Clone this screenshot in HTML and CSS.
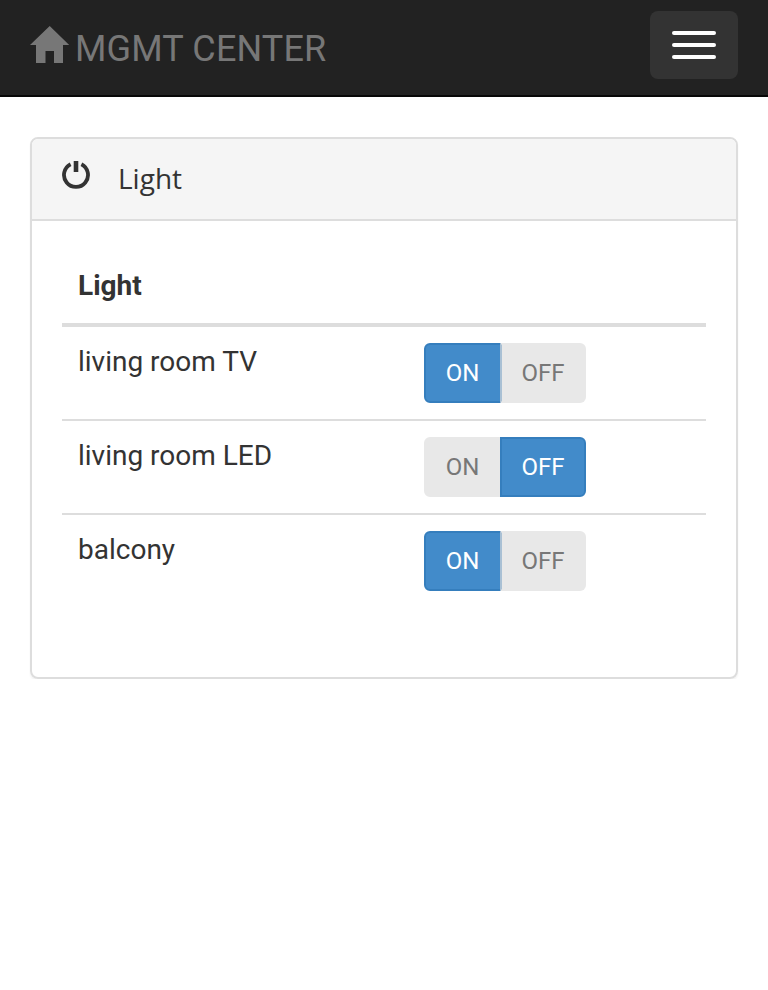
FILE: index.html
```html
<!DOCTYPE html>
<html lang="en">
<head>
<meta charset="utf-8">
<title>MGMT CENTER</title>
<link rel="stylesheet" href="styles.css">
</head>
<body>
<nav class="navbar">
  <a class="brand">
    <svg class="home" width="40" height="38" viewBox="0 0 40 38"><path d="M19.7 0L39.2 19H33V37H24V25H15.5V37H6V19H0Z"/></svg>
    <span class="brand-name">MGMT CENTER</span>
  </a>
  <button class="toggle" aria-label="Menu"><i></i><i></i><i></i></button>
</nav>
<main class="panel">
  <header class="panel-heading">
    <svg class="power" width="28" height="30" viewBox="0 0 28 30"><path class="ring" d="M8.6 4.2A12 12 0 1 0 19.4 4.2"/><path class="bar" d="M11.7 1h4.6v11h-4.6z"/></svg>
    <span>Light</span>
  </header>
  <div class="panel-body">
    <table class="table">
      <thead><tr><th colspan="2">Light</th></tr></thead>
      <tbody>
        <tr><td class="name">living room TV</td><td><div class="group"><button class="btn on active">ON</button><button class="btn off">OFF</button></div></td></tr>
        <tr><td class="name">living room LED</td><td><div class="group"><button class="btn on">ON</button><button class="btn off active">OFF</button></div></td></tr>
        <tr><td class="name">balcony</td><td><div class="group"><button class="btn on active">ON</button><button class="btn off">OFF</button></div></td></tr>
      </tbody>
    </table>
  </div>
</main>
</body>
</html>
```
FILE: styles.css
```css
* { box-sizing: border-box; }
body {
  margin: 0;
  background: #fff;
  color: #333;
  font: 28px/38px Roboto, sans-serif;
}
.navbar {
  display: flex;
  justify-content: space-between;
  align-items: flex-start;
  height: 97px;
  padding: 11px 30px 0;
  background: #222;
  border-bottom: 2px solid #080808;
}
.brand {
  display: flex;
  align-items: flex-start;
  padding-top: 15px;
  color: #777;
  font-size: 36px;
  line-height: 46px;
  letter-spacing: .15px;
}
.home { margin-right: 5px; fill: #777; }
.toggle {
  display: flex;
  flex-direction: column;
  gap: 8px;
  width: 88px;
  height: 68px;
  padding: 20px 22px;
  border: 0;
  border-radius: 8px;
  background: #333;
}
.toggle i { height: 4px; border-radius: 2px; background: #fff; }
.panel {
  margin: 40px 30px 0;
  border: 2px solid #ddd;
  border-radius: 8px;
  box-shadow: 0 2px 2px rgba(0, 0, 0, .05);
}
.panel-heading {
  display: flex;
  align-items: flex-start;
  height: 82px;
  padding: 20px 30px;
  border-bottom: 2px solid #ddd;
  border-radius: 6px 6px 0 0;
  background: #f5f5f5;
  font-family: "Open Sans", sans-serif;
}
.power { margin: 1px 28px 0 0; }
.ring { fill: none; stroke: #333; stroke-width: 3.8; }
.bar { fill: #333; }
.panel-body { padding: 30px; }
.table {
  width: 100%;
  margin-bottom: 40px;
  border-collapse: separate;
  border-spacing: 0;
  table-layout: fixed;
}
.table th {
  padding: 16px 16px 18px;
  border-bottom: 4px solid #ddd;
  text-align: left;
}
.table td {
  padding: 16px;
  border-top: 2px solid #ddd;
  vertical-align: top;
}
.table td:last-child { padding-left: 40px; }
.table tbody tr:first-child td { border-top: 0; }
.group { display: flex; }
.btn {
  height: 60px;
  padding: 0;
  border: 2px solid #e8e8e8;
  background: #e8e8e8;
  color: #777;
  font: 24px/36px Roboto, sans-serif;
}
.on { width: 78px; padding-right: 1px; border-radius: 6px 0 0 6px; }
.off { width: 86px; margin-left: -2px; border-radius: 0 6px 6px 0; }
.btn.active { border-color: #357ebd; background: #428bca; color: #fff; }
.on.active + .off { border-left-color: #a9c0d4; }
```
